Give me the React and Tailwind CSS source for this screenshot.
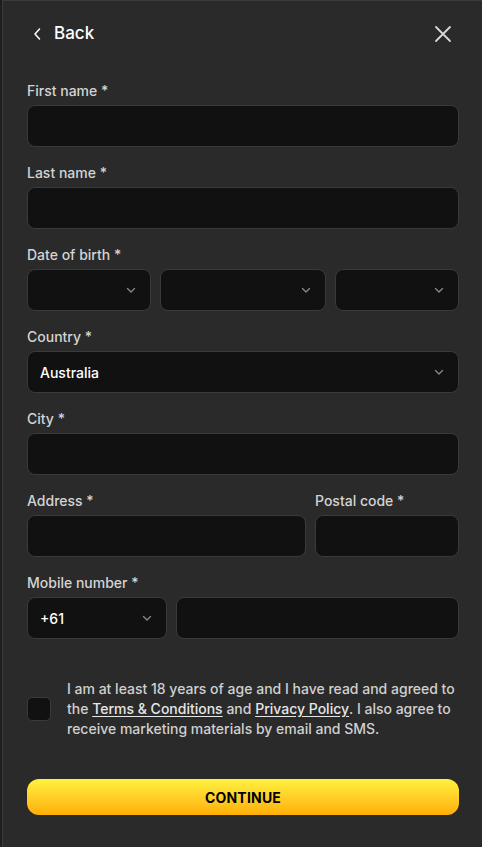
import React from "react";

const Chevron = () => (
  <svg width="12" height="12" viewBox="0 0 12 12" fill="none" className="shrink-0">
    <path d="M2.5 4.5L6 8L9.5 4.5" stroke="#8a8a8a" strokeWidth="1.3" strokeLinecap="round" strokeLinejoin="round" />
  </svg>
);

const Label = ({ children }) => (
  <div className="text-[14px] leading-[20px] font-[450] text-[#d4d4d4] mb-[4px]">{children}</div>
);

const Input = ({ className = "" }) => (
  <div className={"h-[42px] rounded-[8px] bg-[#111111] border border-[#3a3a3a] " + className} />
);

const Select = ({ value, className = "" }) => (
  <div className={"h-[42px] rounded-[8px] bg-[#111111] border border-[#3a3a3a] flex items-center justify-between pl-[12px] pr-[13px] " + className}>
    <span className="text-[14px] text-white font-[450]">{value}</span>
    <Chevron />
  </div>
);

export default function App() {
  return (
    <div className="min-h-[847px] bg-[#1e1e1e] pl-[2px]" style={{ fontFamily: "Inter, 'Noto Sans', sans-serif" }}>
      <div className="min-h-[847px] bg-[#2a2a2a] border-l border-t border-[#3a3a3a] pl-[24px] pr-[23px]">
        <div className="h-[64px] flex items-center justify-between pt-[1px]">
          <div className="flex items-center gap-[12px] pl-[6px]">
            <svg width="9" height="14" viewBox="0 0 9 14" fill="none">
              <path d="M6.5 2L2 7L6.5 12" stroke="white" strokeWidth="1.5" strokeLinecap="round" strokeLinejoin="round" />
            </svg>
            <span className="text-[17px] font-medium text-white">Back</span>
          </div>
          <svg width="18" height="18" viewBox="0 0 18 18" fill="none" className="mr-[7px]">
            <path d="M2 2L16 16M16 2L2 16" stroke="#d8d8d8" strokeWidth="1.8" strokeLinecap="round" />
          </svg>
        </div>

        <div className="flex flex-col gap-[16px] pt-[16px]">
          <div>
            <Label>First name *</Label>
            <Input />
          </div>
          <div>
            <Label>Last name *</Label>
            <Input />
          </div>
          <div>
            <Label>Date of birth *</Label>
            <div className="grid grid-cols-[3fr_4fr_3fr] gap-[9px]">
              <Select value="" />
              <Select value="" />
              <Select value="" />
            </div>
          </div>
          <div>
            <Label>Country *</Label>
            <Select value="Australia" />
          </div>
          <div>
            <Label>City *</Label>
            <Input />
          </div>
          <div className="grid grid-cols-[1fr_144px] gap-[9px]">
            <div>
              <Label>Address *</Label>
              <Input />
            </div>
            <div>
              <Label>Postal code *</Label>
              <Input />
            </div>
          </div>
          <div>
            <Label>Mobile number *</Label>
            <div className="grid grid-cols-[140px_1fr] gap-[9px]">
              <Select value="+61" />
              <Input />
            </div>
          </div>
        </div>

        <div className="flex items-center gap-[16px] mt-[40px]">
          <div className="w-[24px] h-[24px] rounded-[5px] bg-[#111111] border border-[#3a3a3a] shrink-0" />
          <p className="text-[14px] leading-[20px] text-[#d0d0d0] font-[450]">
            I am at least 18 years of age and I have read and agreed to the{" "}
            <span className="underline underline-offset-2 text-[#e6e6e6] font-medium">Terms &amp; Conditions</span> and{" "}
            <span className="underline underline-offset-2 text-[#e6e6e6] font-medium">Privacy Policy</span>. I also agree to receive marketing materials by email and SMS.
          </p>
        </div>

        <button className="mt-[40px] w-full h-[36px] rounded-[12px] bg-gradient-to-b from-[#fff23f] to-[#ffae00] text-black text-[14px] font-bold tracking-[0.2px]">
          CONTINUE
        </button>
      </div>
    </div>
  );
}
